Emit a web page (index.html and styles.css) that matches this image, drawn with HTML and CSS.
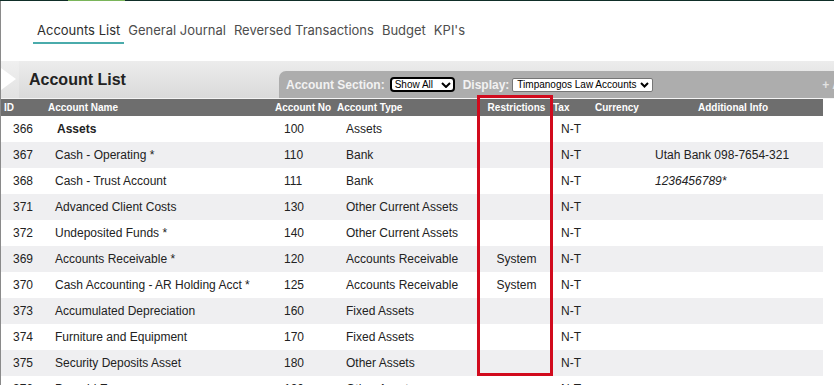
FILE: index.html
```html
<!DOCTYPE html>
<html>
<head>
<meta charset="utf-8">
<link rel="stylesheet" href="styles.css">
</head>
<body>
<div class="topline"><span class="seg seg-a"></span><span class="seg seg-b"></span><span class="seg seg-c"></span></div>
<div class="page">
  <nav class="tabs">
    <a class="tab active">Accounts List</a>
    <a class="tab">General Journal</a>
    <a class="tab">Reversed Transactions</a>
    <a class="tab">Budget</a>
    <a class="tab">KPI's</a>
  </nav>
  <div class="band">
    <div class="band-left"><span class="tri"></span></div>
    <h1 class="title">Account List</h1>
    <div class="filter">
      <span class="flabel">Account Section:</span>
      <span class="sel sel-dark">Show All<svg class="chev" width="10" height="6" viewBox="0 0 10 6"><polyline points="1,1 5,5 9,1" fill="none" stroke="#000" stroke-width="2"/></svg></span>
      <span class="flabel lbl-display">Display:</span>
      <span class="sel sel-light">Timpanogos Law Accounts<svg class="chev" width="9" height="6" viewBox="0 0 9 6"><polyline points="1,1 4.5,4.5 8,1" fill="none" stroke="#000" stroke-width="2"/></svg></span>
      <span class="add">+ Add Account</span>
    </div>
  </div>
  <table class="grid">
    <colgroup>
      <col class="w-id"><col class="w-name"><col class="w-no"><col class="w-type"><col class="w-res"><col class="w-tax"><col class="w-cur"><col class="w-info">
    </colgroup>
    <thead>
      <tr>
        <th>ID</th><th>Account Name</th><th>Account No</th><th>Account Type</th><th class="c">Restrictions</th><th>Tax</th><th>Currency</th><th class="c">Additional Info</th>
      </tr>
    </thead>
    <tbody>
      <tr><td class="id">366</td><td class="name bold">Assets</td><td class="no">100</td><td class="type">Assets</td><td class="res"></td><td class="tax">N-T</td><td></td><td class="info"></td></tr>
      <tr><td class="id">367</td><td class="name">Cash - Operating *</td><td class="no">110</td><td class="type">Bank</td><td class="res"></td><td class="tax">N-T</td><td></td><td class="info">Utah Bank 098-7654-321</td></tr>
      <tr><td class="id">368</td><td class="name">Cash - Trust Account</td><td class="no">111</td><td class="type">Bank</td><td class="res"></td><td class="tax">N-T</td><td></td><td class="info"><i>1236456789*</i></td></tr>
      <tr><td class="id">371</td><td class="name">Advanced Client Costs</td><td class="no">130</td><td class="type">Other Current Assets</td><td class="res"></td><td class="tax">N-T</td><td></td><td class="info"></td></tr>
      <tr><td class="id">372</td><td class="name">Undeposited Funds *</td><td class="no">140</td><td class="type">Other Current Assets</td><td class="res"></td><td class="tax">N-T</td><td></td><td class="info"></td></tr>
      <tr><td class="id">369</td><td class="name">Accounts Receivable *</td><td class="no">120</td><td class="type">Accounts Receivable</td><td class="res">System</td><td class="tax">N-T</td><td></td><td class="info"></td></tr>
      <tr><td class="id">370</td><td class="name">Cash Accounting - AR Holding Acct *</td><td class="no">125</td><td class="type">Accounts Receivable</td><td class="res">System</td><td class="tax">N-T</td><td></td><td class="info"></td></tr>
      <tr><td class="id">373</td><td class="name">Accumulated Depreciation</td><td class="no">160</td><td class="type">Fixed Assets</td><td class="res"></td><td class="tax">N-T</td><td></td><td class="info"></td></tr>
      <tr><td class="id">374</td><td class="name">Furniture and Equipment</td><td class="no">170</td><td class="type">Fixed Assets</td><td class="res"></td><td class="tax">N-T</td><td></td><td class="info"></td></tr>
      <tr><td class="id">375</td><td class="name">Security Deposits Asset</td><td class="no">180</td><td class="type">Other Assets</td><td class="res"></td><td class="tax">N-T</td><td></td><td class="info"></td></tr>
      <tr><td class="id">376</td><td class="name">Prepaid Expenses</td><td class="no">190</td><td class="type">Other Assets</td><td class="res"></td><td class="tax">N-T</td><td></td><td class="info"></td></tr>
    </tbody>
  </table>
</div>
<div class="highlight"></div>
</body>
</html>
```
FILE: styles.css
```css
* { box-sizing: border-box; }
html, body { margin: 0; padding: 0; background: #fff; overflow: hidden; }
body { width: 834px; height: 385px; position: relative; font-family: "Liberation Sans", Arial, sans-serif; }

.topline { display: flex; height: 1px; }
.seg { display: block; height: 1px; }
.seg-a { width: 68px; background: #0f2e28; }
.seg-b { width: 57px; background: #7ab55a; }
.seg-c { flex: 1; background: #0f2e28; }

.page { border-left: 1px solid #8a8a8a; height: 384px; }

.tabs { display: flex; gap: 0; padding: 21px 0 0 32px; height: 60px; }
.tab {
  font-family: Inter, "Noto Sans", sans-serif;
  font-size: 13px; line-height: 17px; color: #4d4d4d;
  padding: 0 4px 3px; height: 22px;
  border-bottom: 2px solid transparent;
}
.tab.active { color: #2d2d2d; border-bottom-color: #4aabab; }

.band {
  display: flex; height: 38px;
  background: linear-gradient(#ececec, #dadada);
  border-bottom: 1px solid #f4f4f4;
}
.band-left { width: 18px; flex-shrink: 0; background: linear-gradient(#f0f0f0, #e2e2e2); display: flex; align-items: center; }
.tri { display: block; width: 0; height: 0; border-left: 15px solid #fff; border-top: 11px solid transparent; border-bottom: 11px solid transparent; margin-top: -1px; }
.title { margin: 0 0 0 10px; width: 250px; flex-shrink: 0; padding-top: 10px; font-size: 16px; line-height: 18px; font-weight: bold; color: #222; }

.filter {
  flex: 1; align-self: flex-end; height: 27px;
  background: #adadad; border-top-left-radius: 7px;
  display: flex; align-items: center; padding-left: 7px;
  overflow: hidden; white-space: nowrap;
}
.filter > * { flex-shrink: 0; }
.flabel { font-size: 12px; line-height: 14px; font-weight: bold; color: #f2f2f2; }
.lbl-display { margin-left: 8px; }
.sel {
  display: flex; align-items: center; justify-content: space-between;
  background: #fff; color: #000; font-size: 10px; line-height: 11px;
}
.sel-dark { width: 65px; height: 15px; margin-left: 5px; border: 2px solid #000; border-radius: 4px; padding: 0 2px 0 3px; }
.sel-light { width: 141px; height: 14px; margin-left: 3px; border: 1px solid #767676; border-radius: 2px; padding: 0 3px 0 4px; }
.chev { display: block; }
.add { margin-left: 169px; font-size: 12px; font-weight: bold; color: #e2e2e2; }

.grid { width: 822px; border-collapse: collapse; table-layout: fixed; }
.w-id { width: 44px; } .w-name { width: 227px; } .w-no { width: 62px; } .w-type { width: 149px; }
.w-res { width: 67px; } .w-tax { width: 42px; } .w-cur { width: 51px; } .w-info { width: 180px; }

.grid th {
  background: #6e6e6e; color: #fff; font-size: 10px; font-weight: bold;
  height: 17px; padding: 0 0 0 3px; text-align: left; white-space: nowrap;
}
.grid th.c { text-align: center; padding: 0; }
.grid td {
  height: 26px; padding: 0 0 0 12px; font-size: 12px; color: #222;
  white-space: nowrap; overflow: hidden;
}
.grid tbody tr:nth-child(even) td { background: #efeff1; }
.grid td.name { padding-left: 10px; }
.grid td.bold { font-weight: bold; padding-left: 12px; }
.grid td.res { text-align: center; padding: 0; }
.grid td.tax { padding-left: 11px; }

.highlight {
  position: absolute; left: 477px; top: 95px; width: 76px; height: 281px;
  border: 3px solid #d10a1d;
}
```
